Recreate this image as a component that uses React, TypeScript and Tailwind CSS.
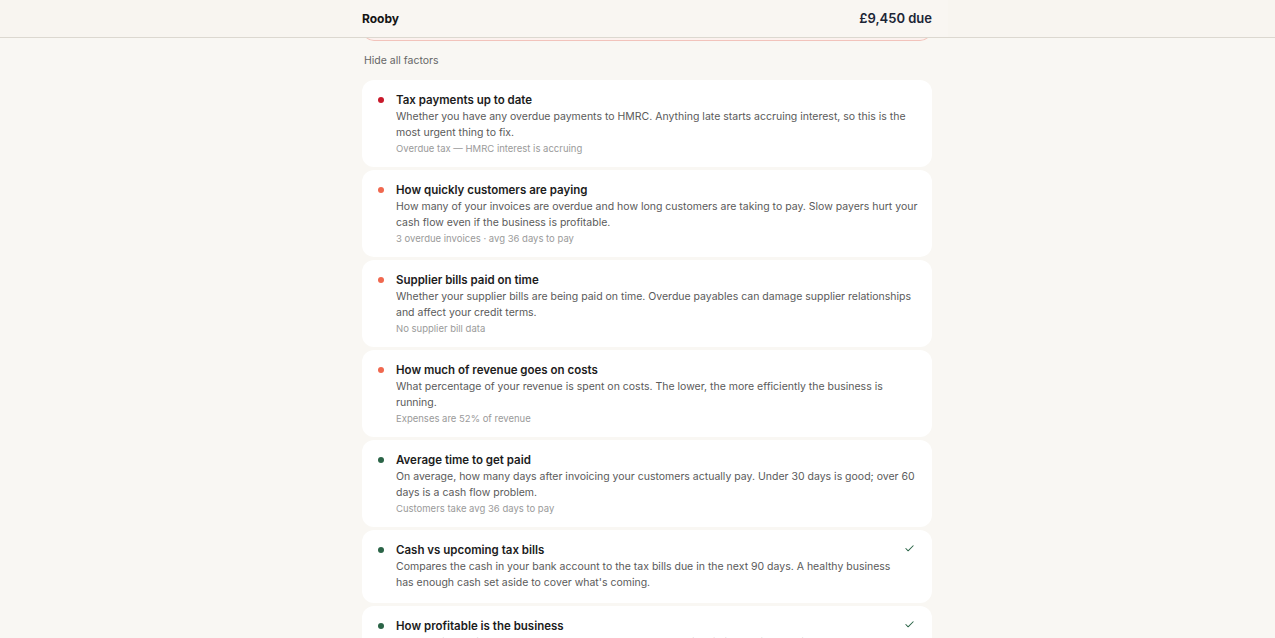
import { Check } from 'lucide-react'

type Factor = {
  title: string
  description: string
  note?: string
  tone: 'red' | 'orange' | 'green'
  ok?: boolean
}

const factors: Factor[] = [
  {
    title: 'Tax payments up to date',
    description:
      'Whether you have any overdue payments to HMRC. Anything late starts accruing interest, so this is the most urgent thing to fix.',
    note: 'Overdue tax — HMRC interest is accruing',
    tone: 'red',
  },
  {
    title: 'How quickly customers are paying',
    description:
      'How many of your invoices are overdue and how long customers are taking to pay. Slow payers hurt your cash flow even if the business is profitable.',
    note: '3 overdue invoices · avg 36 days to pay',
    tone: 'orange',
  },
  {
    title: 'Supplier bills paid on time',
    description:
      'Whether your supplier bills are being paid on time. Overdue payables can damage supplier relationships and affect your credit terms.',
    note: 'No supplier bill data',
    tone: 'orange',
  },
  {
    title: 'How much of revenue goes on costs',
    description:
      'What percentage of your revenue is spent on costs. The lower, the more efficiently the business is running.',
    note: 'Expenses are 52% of revenue',
    tone: 'orange',
  },
  {
    title: 'Average time to get paid',
    description:
      'On average, how many days after invoicing your customers actually pay. Under 30 days is good; over 60 days is a cash flow problem.',
    note: 'Customers take avg 36 days to pay',
    tone: 'green',
  },
  {
    title: 'Cash vs upcoming tax bills',
    description:
      "Compares the cash in your bank account to the tax bills due in the next 90 days. A healthy business has enough cash set aside to cover what's coming.",
    tone: 'green',
    ok: true,
  },
  {
    title: 'How profitable is the business',
    description:
      'Your profit margin over the last twelve months, compared with similar businesses in your sector.',
    tone: 'green',
    ok: true,
  },
]

const dotColor = {
  red: 'bg-[#c8192b]',
  orange: 'bg-[#f0684f]',
  green: 'bg-[#2b6447]',
}

function FactorCard({ factor }: { factor: Factor }) {
  return (
    <div className="flex items-start rounded-xl bg-white pl-4 pr-3 py-3">
      <span className={`mt-[5px] h-[6px] w-[6px] shrink-0 rounded-full ${dotColor[factor.tone]}`} />
      <div className="ml-3 flex-1">
        <div className="mb-[1px] text-[11.5px] font-semibold leading-4 text-[#1c1c1c]">{factor.title}</div>
        <p className="text-[10.5px] leading-4 text-[#5a5a5a]">{factor.description}</p>
        {factor.note && <div className="mt-[2px] text-[9.5px] leading-[12px] text-[#9a9a9a]">{factor.note}</div>}
      </div>
      {factor.ok && (
        <Check className="ml-2 mr-[5px] mt-[1px] h-[11px] w-[11px] shrink-0 text-[#2b6447]" strokeWidth={2.25} />
      )}
    </div>
  )
}

export default function App() {
  return (
    <div className="min-h-screen bg-[#f9f7f3] font-['Inter','Liberation_Sans',sans-serif]">
      <header className="sticky top-0 z-10 h-[38px] border-b border-[#dcd8d0] bg-[#f8f5f0]">
        <div className="ml-[350px] flex h-full w-[598px] items-center justify-between bg-[#f9f6f2] pl-3 pr-4">
          <span className="text-[12px] font-bold text-[#141414]">Rooby</span>
          <span className="text-[13px] font-semibold text-[#1c2536]">£9,450 due</span>
        </div>
      </header>

      <main className="ml-[350px] w-[594px] px-3">
        {/* bottom of the alert card, scrolled up under the header */}
        <div className="flex h-[3px] items-end overflow-hidden">
          <div className="h-[14px] w-full shrink-0 rounded-b-xl border border-t-0 border-[#f2c3bb] bg-[#fcf1ee]" />
        </div>

        <button className="block pt-[13px] pb-[12px] pl-[2px] text-[10.5px] leading-[14px] text-[#666]">Hide all factors</button>

        <div className="flex flex-col gap-[3px]">
          {factors.map((factor) => (
            <FactorCard key={factor.title} factor={factor} />
          ))}
        </div>
      </main>
    </div>
  )
}
